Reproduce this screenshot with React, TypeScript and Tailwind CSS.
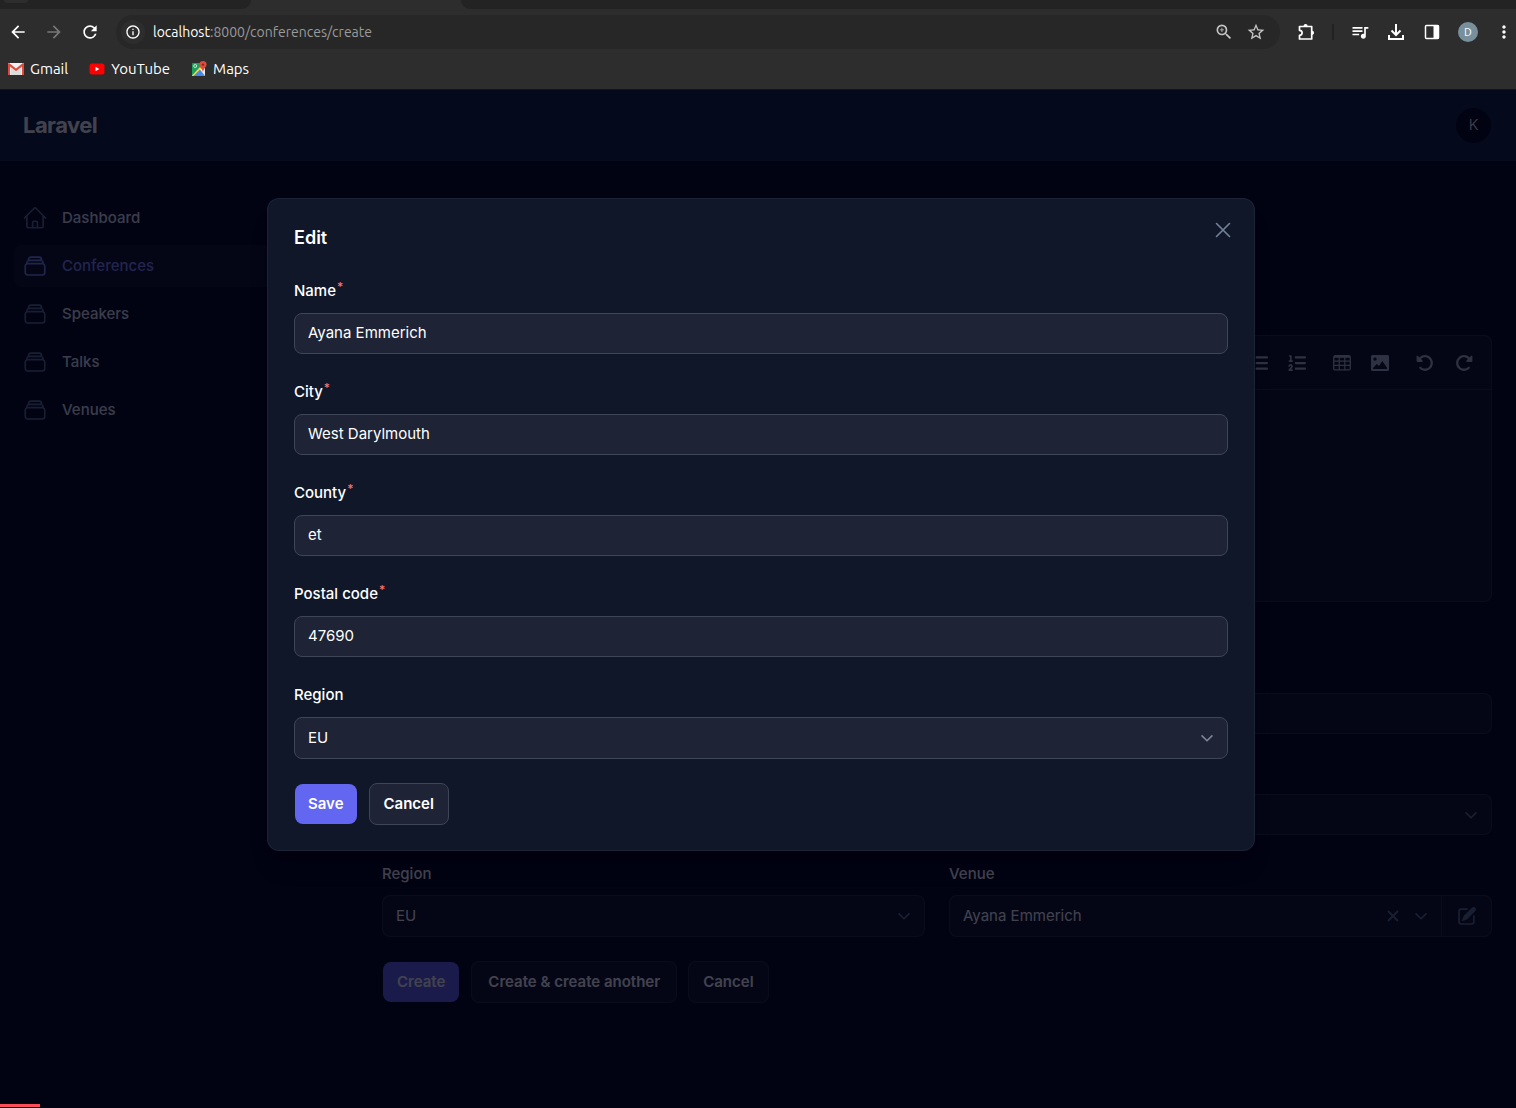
import React from "react";
import { MdArrowBack, MdArrowForward, MdRefresh, MdInfoOutline, MdZoomIn, MdStarBorder, MdQueueMusic, MdMoreVert } from "react-icons/md";
import { FaListUl, FaListOl, FaRotateLeft, FaRotateRight } from "react-icons/fa6";

const HomeIcon = () => (
  <svg viewBox="0 0 24 24" className="size-[26px]" fill="none" stroke="currentColor" strokeWidth="1.5" strokeLinecap="round" strokeLinejoin="round" aria-hidden="true">
    <path d="m2.25 12 8.954-8.955c.44-.439 1.152-.439 1.591 0L21.75 12M4.5 9.75v10.125c0 .621.504 1.125 1.125 1.125H9.75v-4.875c0-.621.504-1.125 1.125-1.125h2.25c.621 0 1.125.504 1.125 1.125V21h4.125c.621 0 1.125-.504 1.125-1.125V9.75M8.25 21h8.25" />
  </svg>
);

const StackIcon = () => (
  <svg viewBox="0 0 24 24" className="size-[26px]" fill="none" stroke="currentColor" strokeWidth="1.5" strokeLinecap="round" strokeLinejoin="round" aria-hidden="true">
    <path d="M6 6.878V6a2.25 2.25 0 0 1 2.25-2.25h7.5A2.25 2.25 0 0 1 18 6v.878m-12 0c.235-.083.487-.128.75-.128h10.5c.263 0 .515.045.75.128m-12 0A2.25 2.25 0 0 0 4.5 9v.878m13.5-3A2.25 2.25 0 0 1 19.5 9v.878m0 0a2.246 2.246 0 0 0-.75-.128H5.25c-.263 0-.515.045-.75.128m15 0A2.25 2.25 0 0 1 21 12v6a2.25 2.25 0 0 1-2.25 2.25H5.25A2.25 2.25 0 0 1 3 18v-6c0-.98.626-1.813 1.5-2.122" />
  </svg>
);

const CloseIcon = () => (
  <svg viewBox="0 0 24 24" className="size-[26px]" fill="none" stroke="currentColor" strokeWidth="1.5" strokeLinecap="round" aria-hidden="true">
    <path d="M6 18 18 6M6 6l12 12" />
  </svg>
);

const Chevron = () => (
  <svg viewBox="0 0 20 20" className="size-[22px]" fill="none" stroke="currentColor" strokeWidth="1.5" strokeLinecap="round" strokeLinejoin="round" aria-hidden="true">
    <path d="m5.500 8 4.500 4.500L14.500 8" />
  </svg>
);

const SmallX = () => (
  <svg viewBox="0 0 12 12" className="size-3" fill="none" stroke="currentColor" strokeWidth="1.8" aria-hidden="true">
    <path d="m1 1 10 10M11 1 1 11" />
  </svg>
);

const PencilSquare = () => (
  <svg viewBox="0 0 20 20" className="size-[22px]" fill="currentColor" aria-hidden="true">
    <path d="m5.433 13.917 1.262-3.155A4 4 0 0 1 7.58 9.42l6.92-6.918a2.121 2.121 0 0 1 3 3l-6.92 6.918c-.383.383-.84.685-1.343.886l-3.154 1.262a.5.5 0 0 1-.65-.65Z" />
    <path d="M3.5 5.75c0-.69.56-1.25 1.25-1.25H10A.75.75 0 0 0 10 3H4.75A2.75 2.75 0 0 0 2 5.75v9.5A2.75 2.75 0 0 0 4.75 18h9.5A2.75 2.75 0 0 0 17 15.25V10a.75.75 0 0 0-1.5 0v5.25c0 .69-.56 1.25-1.25 1.25h-9.5c-.69 0-1.25-.56-1.25-1.25v-9.5Z" />
  </svg>
);

const TableIcon = () => (
  <svg viewBox="0 0 18 16" className="h-4 w-[18px]" fill="none" stroke="currentColor" aria-hidden="true">
    <rect x="0.7" y="0.7" width="16.600" height="14.200" rx="1.500" strokeWidth="1.300" />
    <path d="M1 1.800h16" strokeWidth="2" />
    <path d="M1 6.200h16M1 10.300h16M6.200 2v13M11.800 2v13" strokeWidth="1.200" />
  </svg>
);

const ImageIcon = () => (
  <svg viewBox="0 0 18 16" className="h-4 w-[18px]" fill="currentColor" fillRule="evenodd" aria-hidden="true">
    <path d="M1.500 0h15A1.500 1.500 0 0 1 18 1.500v13a1.500 1.500 0 0 1-1.500 1.500h-15A1.500 1.500 0 0 1 0 14.500v-13A1.500 1.500 0 0 1 1.500 0zM4 2.400a1.700 1.700 0 1 0 0 3.400 1.700 1.700 0 0 0 0-3.400zM2 14h14v-1.200L11.300 6 8 11 5.800 9 2 13z" />
  </svg>
);

const PuzzleIcon = () => (
  <svg viewBox="0 0 20 20" className="size-5" aria-hidden="true">
    <path d="M3.500 4.500h12.200V17H3.500v-3.700c2 0 2.600-1.100 2.600-2.500S5.500 8.300 3.500 8.300z" fill="none" stroke="currentColor" strokeWidth="1.700" strokeLinejoin="round" />
    <path d="M7.500 4.200a2.100 2.100 0 0 1 4.200 0zM16 8.700a2.100 2.100 0 0 1 0 4.200z" fill="currentColor" />
  </svg>
);

const DownloadIcon = () => (
  <svg viewBox="0 0 16 16" className="size-4" fill="none" stroke="currentColor" strokeWidth="2" aria-hidden="true">
    <path d="M8 0v11M3.500 6.500 8 11l4.500-4.500M1 11v4h14v-4" />
  </svg>
);

const SidePanelIcon = () => (
  <svg viewBox="0 0 16 16" className="size-4" aria-hidden="true">
    <rect x="1.500" y="1.500" width="13" height="13" rx="1" fill="none" stroke="currentColor" strokeWidth="1.500" />
    <path d="M9.500 1h5v14h-5z" fill="currentColor" />
  </svg>
);

const GmailIcon = () => (
  <svg viewBox="0 0 16 12" className="h-3 w-4" aria-hidden="true">
    <rect width="16" height="12" rx="1.200" fill="#f1efef" />
    <path d="M3 12V5l5 4 5-4v7z" fill="#dcdcdc" />
    <path d="M0 1.200V12h2V3.600l6 4.700 6-4.700V12h2V1.200C16 .3 15 0 14.300.5L8 5.500 1.700.5C1 0 0 .3 0 1.200z" fill="#dd4b3e" />
  </svg>
);

const YouTubeIcon = () => (
  <svg viewBox="0 0 16 12" className="h-3 w-4" aria-hidden="true">
    <rect x="0.500" y="0.500" width="15" height="11" rx="2.500" fill="#f00" />
    <path d="M6.500 3.700v4.600L10.300 6z" fill="#fff" />
  </svg>
);

const MapsIcon = () => (
  <svg viewBox="0 0 16 16" className="size-4" aria-hidden="true">
    <path d="M1 3a1 1 0 0 1 1-1h11v13H1z" fill="#1e9e5a" />
    <path d="M1 14.500 9 6l5 5v4H1z" fill="#fcd93b" />
    <path d="M2.500 15 9 8.500l5 5V15z" fill="#4688f1" />
    <path d="M9 8.500 14 4v11z" fill="#e8e8e8" />
    <circle cx="4.200" cy="5" r="1.500" fill="none" stroke="#d9f0e2" strokeWidth="0.900" />
    <path d="M12 0a3.600 3.600 0 0 0-3.600 3.600C8.400 6 11 7 12 11c1-4 3.600-5 3.600-7.400A3.600 3.600 0 0 0 12 0z" fill="#e24a3b" />
    <circle cx="12" cy="3.600" r="1.200" fill="#8c261d" />
  </svg>
);

function BrowserBar() {
  return (
    <header className="relative z-10 border-b border-[#161616] bg-[#2d2d2d] font-['Ubuntu','Noto_Sans',sans-serif] text-white">
      <div className="flex h-[9px] bg-[#2d2d2d]">
        <div className="flex w-[251px] rounded-br-xl bg-[#232323]">
          <div className="ml-1 h-[3px] w-6 rounded-b-full bg-[#2d2d2d]" />
        </div>
        <div className="w-[210px]" />
        <div className="flex-1 rounded-bl-xl bg-[#232323]" />
      </div>
      <div className="flex h-[46px] items-center">
        <div className="flex items-center gap-4 pl-2">
          <button aria-label="Back"><MdArrowBack className="size-5" /></button>
          <button aria-label="Forward" className="text-[#777777]"><MdArrowForward className="size-5" /></button>
          <button aria-label="Reload"><MdRefresh className="size-5" /></button>
        </div>
        <div className="ml-4 flex h-[34px] flex-1 items-center rounded-full bg-[#272727] pr-3.5 pl-[5px]">
          <button aria-label="Site information" className="flex size-6 items-center justify-center rounded-full bg-[#2d2d2d]"><MdInfoOutline className="size-4" /></button>
          <div className="ml-2 flex-1 text-sm text-[#9a9a9a]"><span className="text-white">localhost</span>:8000/conferences/create</div>
          <button aria-label="Zoom" className="text-[#c4c4c4]"><MdZoomIn className="size-5" /></button>
          <button aria-label="Bookmark" className="ml-3 text-[#c4c4c4]"><MdStarBorder className="size-5" /></button>
        </div>
        <div className="flex items-center pr-0.5 pl-4">
          <button aria-label="Extensions"><PuzzleIcon /></button>
          <div className="mx-4 h-4 w-0.5 bg-[#222222]" />
          <button aria-label="Media"><MdQueueMusic className="size-5" /></button>
          <button aria-label="Downloads" className="ml-[18px]"><DownloadIcon /></button>
          <button aria-label="Side panel" className="ml-5"><SidePanelIcon /></button>
          <button aria-label="Profile" className="ml-[18px] flex size-5 items-center justify-center rounded-full bg-[#78909c] text-[11px]">D</button>
          <button aria-label="Menu" className="ml-4"><MdMoreVert className="size-5" /></button>
        </div>
      </div>
      <nav className="flex h-[34px] gap-[21px] pl-2 text-[15px] leading-7">
        <a href="#gmail" className="flex h-7 items-center gap-1.5"><GmailIcon />Gmail</a>
        <a href="#youtube" className="flex h-7 items-center gap-1.5"><YouTubeIcon />YouTube</a>
        <a href="#maps" className="flex h-7 items-center gap-1.5"><MapsIcon />Maps</a>
      </nav>
    </header>
  );
}

const navItems = ["Dashboard", "Conferences", "Speakers", "Talks", "Venues"];

function Sidebar() {
  return (
    <nav className="flex w-[352px] shrink-0 flex-col gap-1.5 px-3.5 pt-9">
      {navItems.map((item) => (
        <a
          key={item}
          href={"#" + item.toLowerCase()}
          className={item === "Conferences" ? "flex items-center gap-3.5 rounded-lg bg-white/5 px-2 py-2 font-medium text-[#818cf8]" : "flex items-center gap-3.5 rounded-lg px-2 py-2 font-medium text-slate-200"}
        >
          <span className={item === "Conferences" ? "" : "text-slate-500"}>{item === "Dashboard" ? <HomeIcon /> : <StackIcon />}</span>
          {item}
        </a>
      ))}
    </nav>
  );
}

function MainForm() {
  return (
    <main className="min-w-0 flex-1 pt-[174px] pr-6 pl-[30px]">
      <div className="rounded-lg border border-white/10 bg-white/5">
        <div className="flex h-[54px] items-center justify-end border-b border-white/10 pr-[18px] text-[#b4bccb]">
          <button aria-label="Bulleted list"><FaListUl className="size-[18px]" /></button>
          <button aria-label="Numbered list" className="ml-5"><FaListOl className="size-[18px]" /></button>
          <button aria-label="Table" className="ml-[27px]"><TableIcon /></button>
          <button aria-label="Image" className="ml-5"><ImageIcon /></button>
          <button aria-label="Undo" className="ml-[27px]"><FaRotateLeft className="size-[18px]" /></button>
          <button aria-label="Redo" className="ml-[21px]"><FaRotateRight className="size-[18px]" /></button>
        </div>
        <textarea aria-label="Description" className="block h-[211px] w-full resize-none bg-transparent outline-none" />
      </div>
      <div className="mt-[91px] grid grid-cols-2 gap-x-6">
        <input aria-label="Date" className="col-start-2 h-[41px] min-w-0 rounded-lg border border-white/10 bg-white/5" />
        <div className="relative col-start-2 mt-[60px]">
          <select aria-label="Status" className="block h-[41px] w-full appearance-none rounded-lg border border-white/10 bg-white/5" />
          <span className="pointer-events-none absolute top-2.5 right-2.5 text-slate-500"><Chevron /></span>
        </div>
        <div className="mt-[27px]">
          <label htmlFor="region" className="block font-medium">Region</label>
          <div className="relative mt-[9px]">
            <select id="region" className="block h-[42px] w-full appearance-none rounded-lg border border-white/10 bg-white/5 px-[13px]"><option>EU</option></select>
            <span className="pointer-events-none absolute top-2.5 right-2.5 text-slate-500"><Chevron /></span>
          </div>
        </div>
        <div className="mt-[27px]">
          <label htmlFor="venue" className="block font-medium">Venue</label>
          <div className="mt-[9px] flex h-[42px] items-center rounded-lg border border-white/10 bg-white/5 text-slate-500">
            <input id="venue" defaultValue="Ayana Emmerich" className="min-w-0 flex-1 bg-transparent px-[13px] text-white outline-none" />
            <button aria-label="Clear venue"><SmallX /></button>
            <button aria-label="Show venues" className="mr-[9px] ml-[11px]"><Chevron /></button>
            <button aria-label="Edit venue" className="flex h-full w-[50px] items-center justify-center border-l border-white/10"><PencilSquare /></button>
          </div>
        </div>
      </div>
      <div className="mt-6 flex gap-[11px] font-semibold">
        <button className="m-px h-10 rounded-lg bg-[#6366f1] px-3.5">Create</button>
        <button className="h-[42px] rounded-lg border border-white/10 bg-white/5 px-4">Create &amp; create another</button>
        <button className="h-[42px] rounded-lg border border-white/10 bg-white/5 px-3.5">Cancel</button>
      </div>
    </main>
  );
}

const fields = [
  { id: "name", label: "Name", value: "Ayana Emmerich" },
  { id: "city", label: "City", value: "West Darylmouth" },
  { id: "county", label: "County", value: "et" },
  { id: "postal", label: "Postal code", value: "47690" },
];

function EditDialog() {
  return (
    <form role="dialog" aria-labelledby="edit-title" className="relative w-full max-w-[988px] rounded-xl border border-white/5 bg-[#0f1729] px-[26px] pt-[26px] pb-[25px] shadow-xl">
      <h2 id="edit-title" className="text-[18px] leading-[26px] font-semibold">Edit</h2>
      <button type="button" aria-label="Close" className="absolute top-[18px] right-[18px] text-[#73829a]"><CloseIcon /></button>
      <div className="mt-7 flex flex-col gap-[26px]">
        {fields.map((f) => (
          <div key={f.id}>
            <label htmlFor={f.id} className="block h-6 font-medium">
              {f.label}<sup className="top-[-5px] ml-px text-[12px] text-[#f87171]">*</sup>
            </label>
            <input id={f.id} defaultValue={f.value} className="mt-[10px] block h-[41px] w-full rounded-lg border border-[#3e4556] bg-[#1e2335] px-[13px] pb-0.5 outline-none" />
          </div>
        ))}
        <div>
          <label htmlFor="edit-region" className="block h-6 font-medium">Region</label>
          <div className="relative mt-[10px]">
            <select id="edit-region" className="block h-[42px] w-full appearance-none rounded-lg border border-[#3e4556] bg-[#1e2335] px-[13px]"><option>EU</option></select>
            <span className="pointer-events-none absolute top-2.5 right-2.5 text-[#7c8494]"><Chevron /></span>
          </div>
        </div>
      </div>
      <div className="mt-6 flex gap-[11px] font-semibold">
        <button type="button" className="m-px h-10 rounded-lg bg-[#6366f1] px-[13px]">Save</button>
        <button type="button" className="h-[42px] rounded-lg border border-[#3e4556] bg-[#1e2335] px-3.5">Cancel</button>
      </div>
    </form>
  );
}

export default function App() {
  return (
    <div className="flex min-h-screen flex-col bg-[#010313]">
      <BrowserBar />
      <div className="relative flex-1 font-['Inter',sans-serif] text-[15px] leading-6 text-white">
        <header className="flex h-[71px] items-center justify-between border-b border-white/5 bg-[#0f1c36] pr-[25px] pl-[23px]">
          <span className="text-[22px] font-bold tracking-tight">Laravel</span>
          <button aria-label="Account" className="flex size-[35px] items-center justify-center rounded-full bg-[#020617] font-light">K</button>
        </header>
        <div className="flex">
          <Sidebar />
          <MainForm />
        </div>
        <div className="absolute inset-0 flex items-start justify-center bg-[#010313]/75 pt-[108px] pl-[6px]">
          <EditDialog />
        </div>
        <div className="absolute bottom-px left-0 h-[3px] w-10 bg-[#ff4d5a]" />
      </div>
    </div>
  );
}
